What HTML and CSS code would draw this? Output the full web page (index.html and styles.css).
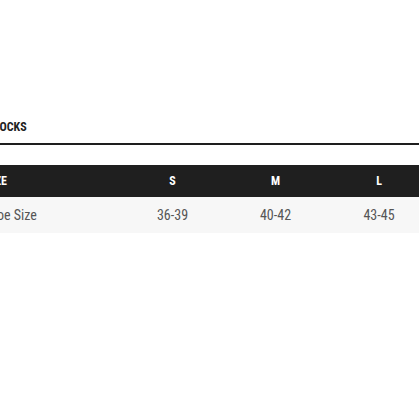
FILE: index.html
```html
<!DOCTYPE html>
<html>
<head>
<meta charset="utf-8">
<link rel="stylesheet" href="styles.css">
</head>
<body>
<div class="page">
  <div class="heading"><h2 class="title">SOCKS</h2></div>
  <div class="table">
    <div class="row head">
      <div class="cell first">SIZE</div>
      <div class="cell">S</div>
      <div class="cell">M</div>
      <div class="cell">L</div>
    </div>
    <div class="row body">
      <div class="cell first shoe">Shoe Size</div>
      <div class="cell">36-39</div>
      <div class="cell">40-42</div>
      <div class="cell">43-45</div>
    </div>
  </div>
</div>
</body>
</html>
```
FILE: styles.css
```css
html, body { margin: 0; padding: 0; background: #fff; overflow: hidden; }
body { font-family: "Roboto Condensed", "Liberation Sans Narrow", Roboto, sans-serif; }
.page { margin-left: -15px; width: 446px; padding-top: 119px; }
.heading { margin-left: 15px; border-bottom: 2px solid #1e1e1e; padding-bottom: 8px; }
.title { margin: 0; margin-left: -7px; font-size: 12px; line-height: 16px; font-weight: 700; color: #222; }
.table { margin-top: 20px; }
.row { display: grid; grid-template-columns: 136px 103px 103px 104px; align-items: center; }
.head { background: #1f1f1f; color: #fff; height: 32px; font-weight: 700; font-size: 12px; }
.body { background: #f7f7f7; color: #555; height: 36px; font-size: 14px; }
.cell { text-align: center; }
.first { text-align: left; }
.shoe { margin-left: -2px; }
```
